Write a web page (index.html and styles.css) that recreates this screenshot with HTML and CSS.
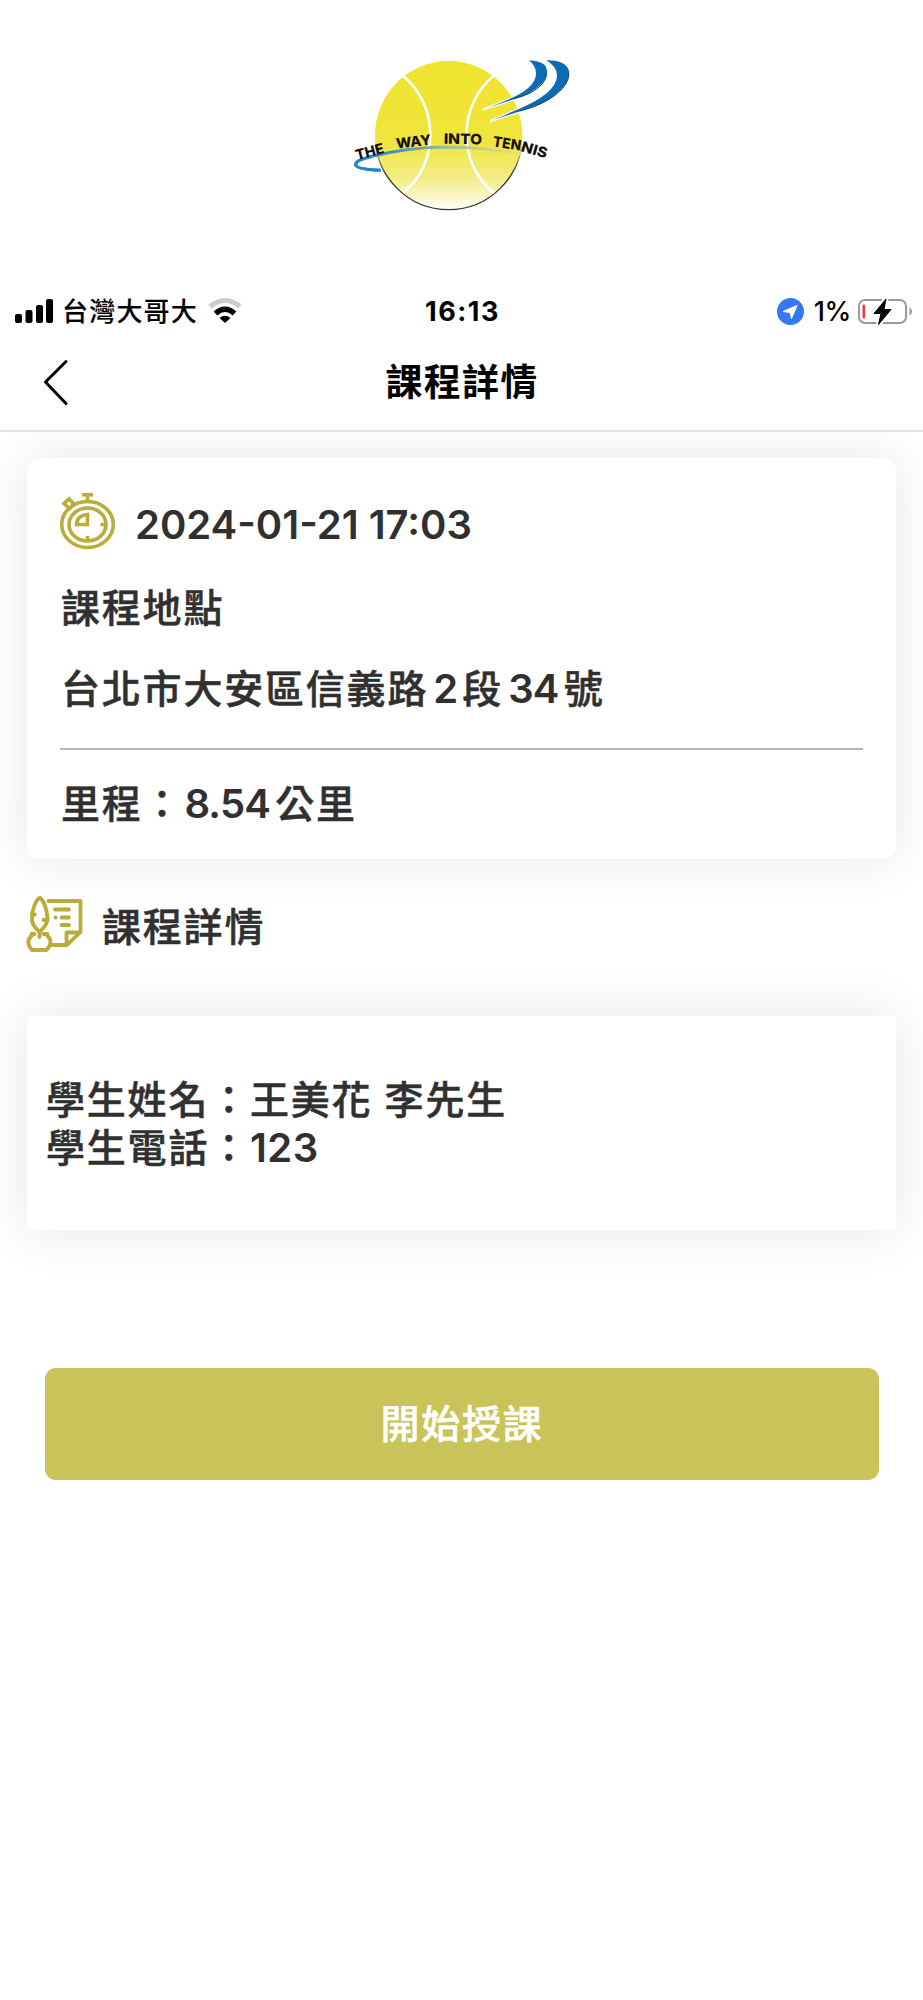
FILE: index.html
```html
<!DOCTYPE html>
<html lang="zh-Hant">
<head>
<meta charset="utf-8">
<title>課程詳情</title>
<link rel="stylesheet" href="styles.css">
</head>
<body>
<header class="brand">
  <svg class="logo" viewBox="0 0 720 540">
    <defs>
      <linearGradient id="ball" x1="0" y1="0" x2="0" y2="1">
        <stop offset="0" stop-color="#efe42c"/><stop offset=".55" stop-color="#f0e53c"/>
        <stop offset=".78" stop-color="#f3ec83"/><stop offset="1" stop-color="#fffffa"/>
      </linearGradient>
      <linearGradient id="edge" x1="0" y1="0" x2="0" y2="1">
        <stop offset=".55" stop-color="#333" stop-opacity="0"/><stop offset=".75" stop-color="#333"/>
      </linearGradient>
      <linearGradient id="swoosh" gradientUnits="userSpaceOnUse" x1="45" y1="0" x2="540" y2="0">
        <stop offset="0" stop-color="#2185cb"/><stop offset=".25" stop-color="#3d92c6"/>
        <stop offset=".6" stop-color="#a9bf9c"/><stop offset="1" stop-color="#ebe36a"/>
      </linearGradient>
      <linearGradient id="tail" gradientUnits="userSpaceOnUse" x1="430" y1="0" x2="560" y2="0">
        <stop offset="0" stop-color="#b9d3e4"/><stop offset=".6" stop-color="#0b6bb5"/>
      </linearGradient>
    </defs>
    <ellipse cx="326" cy="286" rx="221" ry="223" fill="url(#ball)" stroke="url(#edge)" stroke-width="4"/>
    <path d="M190 108C298 200 298 370 190 458M460 108C352 200 352 370 462 460" fill="none" stroke="#fff" stroke-width="8"/>
    <path d="M430 208Q490 185 520 172Q588 140 588 100Q588 78 567 61Q600 62 615 76Q632 100 606 130Q575 164 520 178Q480 192 430 208Z" fill="url(#tail)" stroke="#fff" stroke-width="7" paint-order="stroke"/>
    <path d="M450 244Q505 220 538 206Q648 160 651 108Q652 80 619 61Q655 60 675 74Q702 98 672 138Q630 192 540 214Q495 228 450 244Z" fill="url(#tail)" stroke="#fff" stroke-width="7" paint-order="stroke"/>
    <path d="M519 177Q583 162 609 129Q620 115 619 100M539 213Q628 190 668 145Q690 117 685 98" fill="none" stroke="#29425d" stroke-width="3"/>
    <path d="M122 391Q48 388 47 374Q46 358 110 346Q200 325 290 322Q420 318 545 342" fill="none" stroke="url(#swoosh)" stroke-width="9"/>
    <path d="M122 391Q48 388 47 374Q46 362 95 350" fill="none" stroke="#2185cb" stroke-width="9"/>
    <g class="logo-text">
      <text transform="translate(51 361) rotate(-15)" textLength="87" lengthAdjust="spacingAndGlyphs">THE</text>
      <text transform="translate(170 326) rotate(-7)" textLength="106" lengthAdjust="spacingAndGlyphs">WAY</text>
      <text transform="translate(311 311) rotate(1)" textLength="115" lengthAdjust="spacingAndGlyphs">INTO</text>
      <text transform="translate(457 319) rotate(9)" textLength="85" lengthAdjust="spacingAndGlyphs">TEN</text>
      <text transform="translate(541 333) rotate(16)" textLength="79" lengthAdjust="spacingAndGlyphs">NIS</text>
    </g>
  </svg>
</header>

<div class="status">
  <div class="status-side">
    <svg class="signal" viewBox="0 0 38 24"><rect y="15" width="7" height="9" rx="2"/><rect x="10.5" y="11" width="7" height="13" rx="2"/><rect x="21" y="6" width="7" height="18" rx="2"/><rect x="31" width="7" height="24" rx="2"/></svg>
    <span class="carrier">台灣大哥大</span>
    <svg class="wifi" viewBox="0 0 34 24"><path d="M2 7.500Q17-4.500 32 7.500" fill="none" stroke="#ccc" stroke-width="5"/><path d="M7.500 14.500Q17 6 26.500 14.500" fill="none" stroke="#000" stroke-width="5.500"/><path d="M11.500 19Q17 14.500 22.500 19L17 24Z"/></svg>
  </div>
  <span class="time">16:13</span>
  <div class="status-side status-right">
    <svg class="locate" viewBox="0 0 27 27"><circle cx="13.500" cy="13.500" r="13.500" fill="#3478f6"/><path d="M6 13.500L20 7.500L14.500 20.500L13 14.500Z" fill="#fff" stroke="#fff" stroke-linejoin="round"/></svg>
    <span class="percent">1%</span>
    <svg class="battery" viewBox="0 0 55 27"><rect x="1" y="2" width="47" height="23" rx="6" fill="none" stroke="#999" stroke-width="2"/><path d="M51.500 9.500Q54 10.500 54 13.500T51.500 17.500Z" fill="#999"/><rect x="4.500" y="6.500" width="2.500" height="14" rx="1" fill="#e93b35"/><path d="M28 1L16 15.500H23L20.500 26.500L33 11.500H26Z" stroke="#fff" stroke-width="5"/><path d="M28 1L16 15.500H23L20.500 26.500L33 11.500H26Z" stroke="#000"/></svg>
  </div>
</div>

<nav class="navbar">
  <svg class="back" viewBox="0 0 26 46"><path d="M23 2.500L2.500 23L23 44.500" fill="none" stroke="#000" stroke-width="3" stroke-linecap="round" stroke-linejoin="round"/></svg>
  <h1 class="title">課程詳情</h1>
</nav>

<main class="content">
  <section class="card lesson">
    <div class="when">
      <svg class="stopwatch" viewBox="0 0 55 56" fill="none" stroke="#b9ac38" stroke-width="3.600">
        <ellipse cx="27.500" cy="31.500" rx="25.800" ry="23"/><ellipse cx="27.500" cy="31.500" rx="18.500" ry="16.500"/>
        <path d="M22 1.800H33M27.500 2V8M9 6L14 11L9.500 15.500L4 10.500Z"/>
        <path d="M27.500 21.500V31.500H16.500Q17 22.500 27.500 21.500ZM27.500 43V48M40.500 31.500H46"/>
      </svg>
      <span class="date">2024-01-21 17:03</span>
    </div>
    <p class="line place">課程地點</p>
    <p class="line address">台北市大安區信義路<span class="num">2</span>段<span class="num">34</span>號</p>
    <hr class="rule">
    <p class="line distance">里程：<span class="num-wide">8.54</span>公里</p>
  </section>

  <div class="section-head">
    <svg class="notes" viewBox="0 0 56 56" fill="none" stroke="#b9ac38" stroke-width="3.800" stroke-linecap="round" stroke-linejoin="round">
      <path d="M21.500 5H53.500V36L40 49H25M39.500 48V36.500H53"/>
      <path d="M28 13.500H42M34.500 21.500H42M28.500 21.500H28.600M34.500 29H42"/>
      <path d="M12.500 36C7 31 4 27 5 21C5.500 12 9 4 12.500 1.800C17 4 20 14 20.500 22C21 27 18 31 12.500 36V41"/>
      <path d="M5 17.500L8 18.500M20.500 23.500L16.500 24"/>
      <path d="M7.500 38H4.500V40Q-2 46 5 54H19.500Q27 46 20.500 40V38H16.500"/>
    </svg>
    <h2 class="line">課程詳情</h2>
  </div>

  <section class="card student">
    <p class="line">學生姓名：王美花 李先生</p>
    <p class="line">學生電話：<span class="phone">123</span></p>
  </section>

  <button class="start">開始授課</button>
</main>
</body>
</html>
```
FILE: styles.css
```css
* { box-sizing: border-box; }
body {
  margin: 0;
  width: 923px;
  height: 2000px;
  background: #fff;
  color: #303030;
  font-family: Inter, "Noto Sans CJK TC", sans-serif;
}
h1, h2, p { margin: 0; }
svg { display: block; flex: none; overflow: visible; }

.brand { height: 285px; padding: 40px 0 0 340px; }
.logo { width: 240px; height: 180px; }
.logo-text { font: 800 43px Inter, sans-serif; fill: #15120c; }

.status {
  display: grid;
  grid-template-columns: 1fr auto 1fr;
  align-items: center;
  height: 52px;
  padding: 0 10px 0 15px;
  color: #000;
}
.status-side { display: flex; align-items: center; }
.status-right { justify-content: flex-end; }
.signal { width: 38px; height: 24px; }
.carrier { margin: 0 10px 0 9px; padding-top: 1px; font-size: 26px; font-weight: 500; letter-spacing: 1.2px; line-height: 40px; -webkit-text-stroke: .1px; }
.wifi { width: 34px; height: 24px; }
.time { margin-right: 3px; font-size: 27px; font-weight: 700; letter-spacing: 1.5px; }
.percent { margin: 0 7px 0 10px; font-size: 27px; font-weight: 500; letter-spacing: -.4px; }
.locate { width: 27px; height: 27px; }
.battery { width: 55px; height: 27px; }

.navbar {
  display: grid;
  grid-template-columns: 80px 1fr 80px;
  align-items: center;
  height: 95px;
  padding-bottom: 4px;
  border-bottom: 2px solid #e2e2e2;
}
.back { width: 26px; height: 46px; margin-left: 43px; }
.title { padding: 2px 0 0 1px; color: #000; text-align: center; font-size: 37px; line-height: 54px; font-weight: 700; letter-spacing: 1.2px; }

.content { height: 1568px; padding: 26px 27px 0 27px; overflow: hidden; }
.card { background: #fff; box-shadow: 0 0 50px rgba(0, 0, 0, .1); }
.line { font-size: 39px; line-height: 48px; font-weight: 500; letter-spacing: 1.8px; white-space: nowrap; -webkit-text-stroke: .5px; }

.lesson { height: 401px; padding: 35px 33px 0; border-radius: 13px; }
.lesson .line { padding-left: 1px; }
.when { display: flex; height: 56px; }
.stopwatch { width: 55px; height: 56px; }
.date { margin: 8px 0 0 20px; font-size: 40px; line-height: 48px; font-weight: 600; }
.place { margin-top: 35px; }
.address { margin-top: 33px; }
.num { margin: 0 5px; }
.num, .num-wide, .phone { font-size: 40px; font-weight: 600; line-height: 1; letter-spacing: -.8px; -webkit-text-stroke: 0; }
.num-wide { margin: 0 5px 0 1px; }
.rule { height: 2px; margin: 35px 0 30px; border: 0; background: #b5b5b5; }

.section-head { display: flex; gap: 19px; height: 157px; padding-top: 37px; }
.section-head .line { margin-top: 7px; }
.notes { width: 56px; height: 56px; }

.student { height: 214px; padding: 60px 19px; }
.student .line { line-height: 47.5px; }
.student .phone { letter-spacing: .4px; }

.start {
  display: block;
  width: 834px;
  height: 112px;
  margin: 138px 0 0 18px;
  border: 0;
  border-radius: 11px;
  background: #c9c359;
  color: #fff;
  font: 500 39px/48px Inter, "Noto Sans CJK TC", sans-serif;
  letter-spacing: 1.7px;
  -webkit-text-stroke: .5px;
}
```
